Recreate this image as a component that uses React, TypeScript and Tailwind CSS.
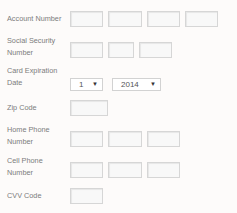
const font = { fontFamily: '"Liberation Sans", Arial, sans-serif' };

// caja de texto gris con sombra interior
const Box = ({ w }: { w: string }) => (
  <div className={`${w} h-[16px] border border-[#d6d6d6] bg-[#f8f8f8] shadow-[inset_1px_1px_1px_rgba(0,0,0,0.07)]`} />
);

const Select = ({ value, w }: { value: string; w: string }) => (
  <div className={`${w} h-[13px] border border-[#d2d2d2] bg-white flex items-center justify-between pl-[8px] pr-[4px] text-[8px] text-[#555]`}>
    <span>{value}</span>
    <span className="text-[6px] text-[#333]">▼</span>
  </div>
);

const Label = ({ children }: { children: React.ReactNode }) => (
  <div className="w-[63px] shrink-0 text-[7.3px] leading-[12px] text-[#7c7c7c]">{children}</div>
);

export default function App() {
  return (
    <div className="w-[237px] h-[213px] bg-[#fdfbfa] pl-[7px] overflow-hidden" style={font}>
      {/* Account Number */}
      <div className="flex items-center pt-[11px]">
        <Label>Account Number</Label>
        <div className="flex gap-[5px]">
          <Box w="w-[33px]" />
          <Box w="w-[34px]" />
          <Box w="w-[33px]" />
          <Box w="w-[33px]" />
        </div>
      </div>

      {/* Social Security Number */}
      <div className="flex items-start mt-[8px]">
        <Label>
          Social Security
          <br />
          Number
        </Label>
        <div className="flex gap-[5px] mt-[7px]">
          <Box w="w-[33px]" />
          <Box w="w-[26px]" />
          <Box w="w-[33px]" />
        </div>
      </div>

      {/* Card Expiration Date */}
      <div className="flex items-start mt-[6px]">
        <Label>
          Card Expiration
          <br />
          Date
        </Label>
        <div className="flex gap-[9px] mt-[13px]">
          <Select value="1" w="w-[33px]" />
          <Select value="2014" w="w-[49px]" />
        </div>
      </div>

      {/* Zip Code */}
      <div className="flex items-center mt-[9px]">
        <Label>Zip Code</Label>
        <Box w="w-[38px]" />
      </div>

      {/* Home Phone Number */}
      <div className="flex items-start mt-[8px]">
        <Label>
          Home Phone
          <br />
          Number
        </Label>
        <div className="flex gap-[5px] mt-[7px]">
          <Box w="w-[33px]" />
          <Box w="w-[34px]" />
          <Box w="w-[33px]" />
        </div>
      </div>

      {/* Cell Phone Number */}
      <div className="flex items-start mt-[7px]">
        <Label>
          Cell Phone
          <br />
          Number
        </Label>
        <div className="flex gap-[5px] mt-[7px]">
          <Box w="w-[33px]" />
          <Box w="w-[34px]" />
          <Box w="w-[33px]" />
        </div>
      </div>

      {/* CVV Code */}
      <div className="flex items-center mt-[9px]">
        <Label>CVV Code</Label>
        <Box w="w-[33px]" />
      </div>
    </div>
  );
}
